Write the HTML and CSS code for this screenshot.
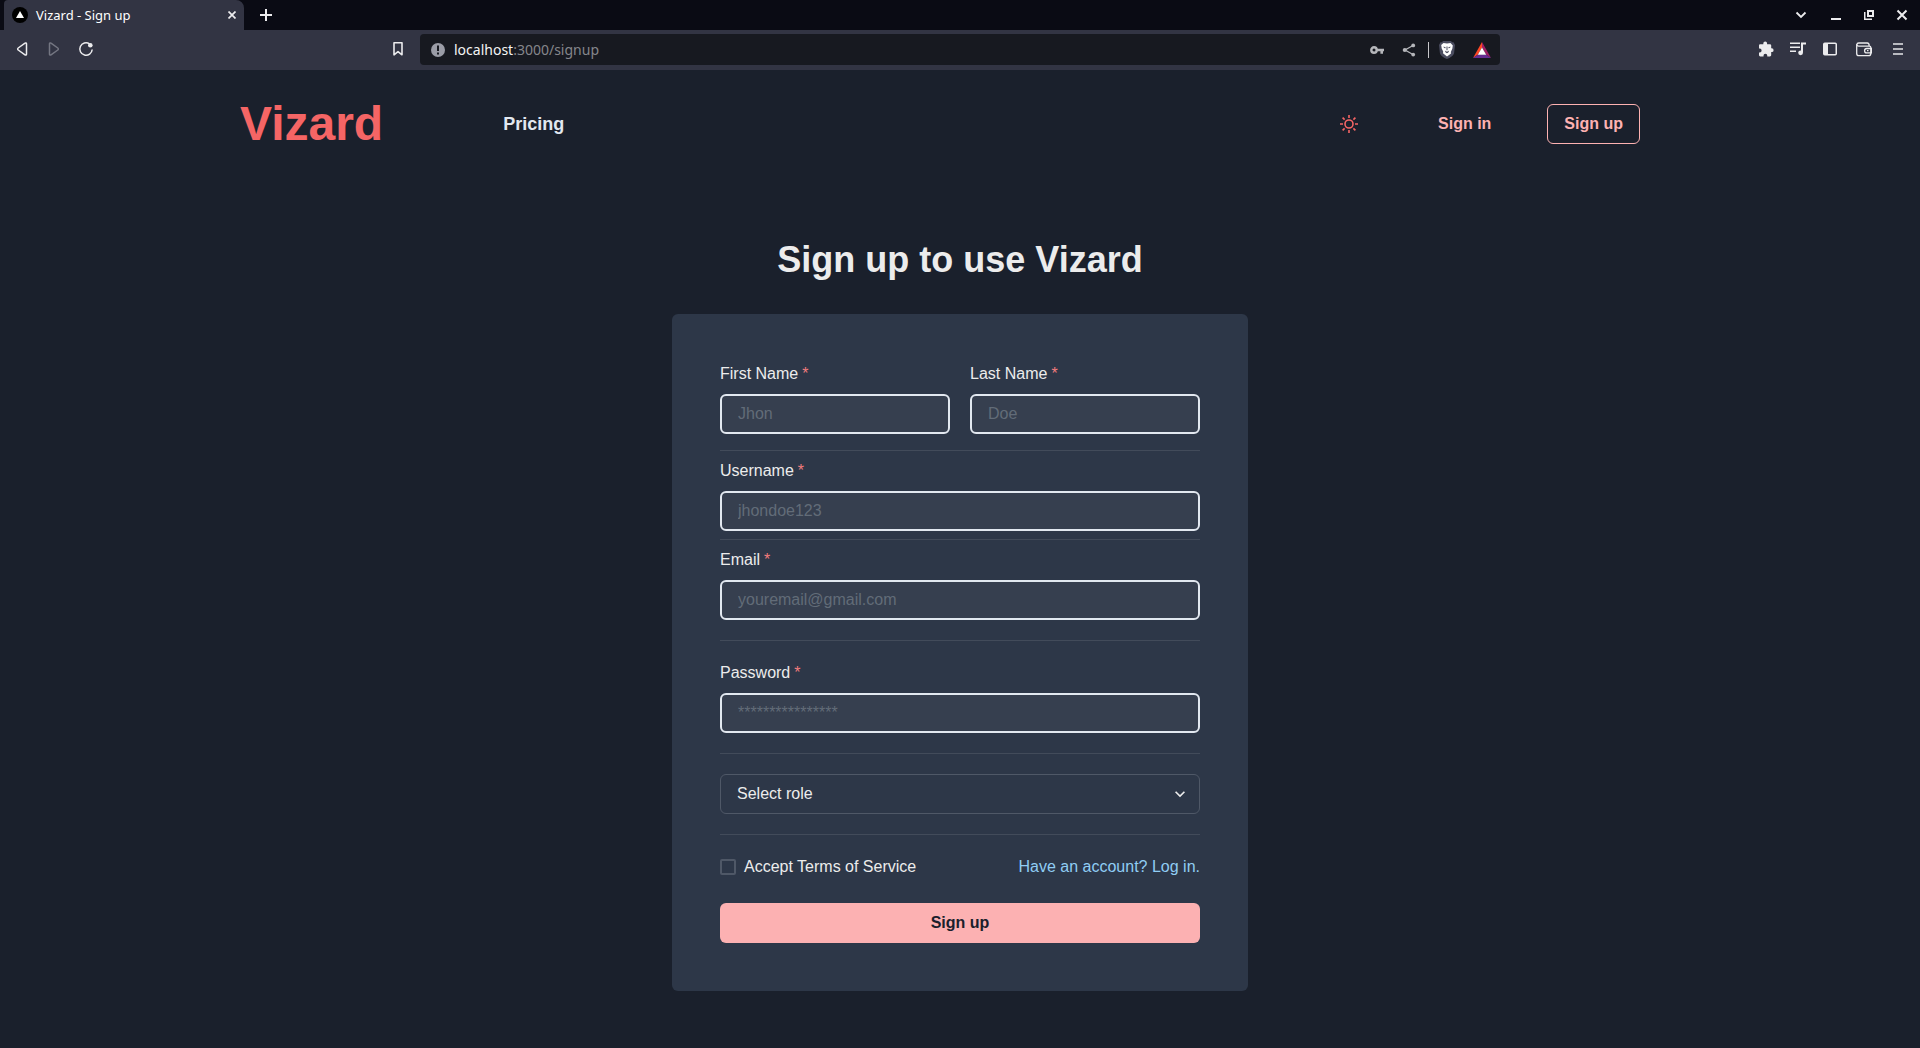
FILE: index.html
```html
<!DOCTYPE html>
<html lang="en">
<head>
  <meta charset="utf-8">
  <meta name="viewport" content="width=device-width, initial-scale=1">
  <title>Vizard - Sign up</title>
  <link rel="stylesheet" href="styles.css">
</head>
<body>
  <div class="browser">
    <div class="tabstrip">
      <div class="tab">
        <svg class="tab-icon" width="16" height="16" viewBox="0 0 16 16" aria-hidden="true"><circle cx="8" cy="8" r="8" fill="#000"/><path d="M8 4l4 7H4z" fill="#fff"/></svg>
        <span class="tab-title">Vizard - Sign up</span>
        <button class="tab-close" aria-label="Close tab"><svg width="8" height="8" viewBox="0 0 8 8"><path d="M.5.5l7 7M7.500.5l-7 7" stroke="currentColor" stroke-width="1.700"/></svg></button>
      </div>
      <button class="tool" aria-label="New tab"><svg width="12" height="12" viewBox="0 0 12 12"><path d="M6 0v12M0 6h12" stroke="currentColor" stroke-width="2"/></svg></button>
      <div class="window-controls">
        <button class="tool tab-search" aria-label="Search tabs"><svg width="12" height="12" viewBox="0 0 12 12" fill="none"><path d="M1.500 3.500L6 8l4.500-4.500" stroke="currentColor" stroke-width="1.800"/></svg></button>
        <button class="tool" aria-label="Minimise"><svg width="12" height="12" viewBox="0 0 12 12"><path d="M1 9h10v2H1z" fill="currentColor"/></svg></button>
        <button class="tool" aria-label="Restore"><svg width="12" height="12" viewBox="0 0 12 12" fill="none" stroke="currentColor"><path d="M5 2h5v5H5z" stroke-width="2"/><path d="M1.750 3v7.250H9" stroke-width="1.500"/></svg></button>
        <button class="tool" aria-label="Close"><svg width="12" height="12" viewBox="0 0 12 12"><path d="M1.500 1.500l9 9M10.500 1.500l-9 9" stroke="currentColor" stroke-width="2"/></svg></button>
      </div>
    </div>
    <div class="toolbar">
      <div class="toolbar-left">
        <button class="tool" aria-label="Back"><svg width="16" height="16" viewBox="0 0 16 16" fill="none"><path d="M12.500 2.800v10.400c0 .9-.9 1.100-1.500.6L4.200 9c-.7-.5-.7-1.500 0-2L11 2.200c.6-.5 1.500-.2 1.500.6z" stroke="currentColor" stroke-width="1.500"/></svg></button>
        <button class="tool tool-off" aria-label="Forward"><svg width="16" height="16" viewBox="0 0 16 16" fill="none"><path d="M3.500 2.800v10.400c0 .9.9 1.100 1.500.6L11.800 9c.7-.5.7-1.500 0-2L5 2.200c-.6-.5-1.500-.2-1.500.6z" stroke="currentColor" stroke-width="1.500"/></svg></button>
        <button class="tool" aria-label="Reload"><svg width="16" height="16" viewBox="0 0 16 16" fill="none"><path d="M11.500 2.900A6.200 6.200 0 1 0 14.200 8.500" stroke="currentColor" stroke-width="1.500"/><circle cx="12.300" cy="4.200" r="2.300" fill="currentColor"/></svg></button>
        <button class="tool bookmark" aria-label="Bookmark this page"><svg width="16" height="16" viewBox="0 0 16 16" fill="none"><path d="M4 1.800h8v12L8 10.600l-4 3.200z" stroke="currentColor" stroke-width="1.600" stroke-linejoin="round"/></svg></button>
      </div>
      <div class="address">
        <svg width="14" height="14" viewBox="0 0 14 14" aria-hidden="true"><circle cx="7" cy="7" r="7" fill="#9a9ca6"/><path d="M6 2.500h2V8H6zM6 9.500h2v2H6z" fill="#171920"/></svg>
        <div class="url"><span class="host">localhost</span>:3000/signup</div>
        <svg width="14" height="14" viewBox="0 0 14 14" fill="none" aria-hidden="true"><circle cx="4" cy="7" r="2.700" stroke="#b5b6ba" stroke-width="2.400"/><path d="M7 5.800h7v2.400h-1v2.600h-2.600V8.200H7z" fill="#b5b6ba"/></svg>
        <svg width="14" height="14" viewBox="0 0 14 14" aria-hidden="true"><path d="M11 2.500L3 7l8 4.500" stroke="#b5b6ba" stroke-width="1.300" fill="none"/><g fill="#b5b6ba"><circle cx="11.200" cy="2.400" r="1.900"/><circle cx="2.800" cy="7" r="2.100"/><circle cx="11.200" cy="11.600" r="1.900"/></g></svg>
        <div class="address-rule"></div>
        <svg width="16" height="18" viewBox="0 0 16 18" aria-hidden="true"><path d="M4 0h8l1 1.200h1.500L16 4l-.9 8c-.4 2.500-4 4.800-7.100 6-3.100-1.200-6.700-3.500-7.100-6L0 4l1.500-2.800H3z" fill="#4a4c5f"/><path d="M4.500 2l3.500.6 3.500-.6 2.300 2.400-.5 3.400-1.500 3.200.2 1.600L8 15.400l-4-3.200.2-1.600-1.500-3.200-.5-3.400z" fill="#fff"/><path d="M4 5.700l2.600.4-.4 1.300zM12 5.700l-2.600.4.4 1.300zM7.500 5.600h1v3.600h-1zM5.800 9.600L8 10.700l2.200-1.100-.9 1.800L8 12.300l-1.300-.9z" fill="#4a4c5f"/></svg>
        <svg width="18" height="16" viewBox="0 0 18 16" aria-hidden="true"><path d="M9 0v5.500L5 12.500 0 16z" fill="#ff4724"/><path d="M9 0v5.500l4 7 5 3.500z" fill="#9e1f63"/><path d="M0 16l5-3.500h8l5 3.500z" fill="#662d91"/><path d="M9 5.500l4.200 7.300H4.800z" fill="#fff"/></svg>
      </div>
      <div class="toolbar-right">
        <button class="tool" aria-label="Extensions"><svg width="16" height="16" viewBox="0 0 16 16"><path d="M1 4.500c0-.8.600-1.300 1.300-1.300h3V2.500a1.900 1.900 0 0 1 3.800 0v.7h2.800c.8 0 1.300.6 1.300 1.300v2.800h.5a1.900 1.900 0 0 1 0 3.800h-.5v3c0 .8-.6 1.300-1.300 1.300H9.300v-.7a1.900 1.900 0 0 0-3.800 0v.7H2.300c-.7 0-1.300-.6-1.300-1.300v-2.700h.7a1.900 1.900 0 0 0 0-3.800H1z" fill="currentColor"/></svg></button>
        <button class="tool" aria-label="Media controls"><svg width="16" height="16" viewBox="0 0 16 16"><path d="M0 1.500h10v1.600H0zM0 5.500h10v1.600H0zM0 9.500h6v1.600H0zM11 1.500h5v2h-3v8h-2z" fill="currentColor"/><circle cx="10.600" cy="11.800" r="2.400" fill="currentColor"/></svg></button>
        <button class="tool" aria-label="Sidebar"><svg width="16" height="16" viewBox="0 0 16 16"><rect x="1.750" y="2.250" width="12.500" height="11.500" rx="1" fill="none" stroke="currentColor" stroke-width="1.500"/><path d="M2 2h4v12H2z" fill="currentColor"/></svg></button>
        <button class="tool tool-spaced" aria-label="Wallet"><svg width="16" height="16" viewBox="0 0 16 16" fill="none" stroke="currentColor" stroke-width="1.300"><path d="M.7 3v9.500c0 1.400.8 2.200 2.200 2.200h9.700c1.400 0 2.200-.8 2.200-2.200V6.500c0-.9-.5-1.400-1.400-1.400H2.800C.3 5.100.3 2 2.800 2h8.500c1.400 0 1.900.6 1.900 3"/><path d="M15.500 7.500h-4.700a2.200 2.200 0 0 0 0 4.400h4.700zM11 9.700h1.500"/></svg></button>
        <button class="tool tool-dim tool-spaced" aria-label="Menu"><svg width="10" height="12" viewBox="0 0 10 12"><path d="M0 0h10v2H0zM0 5h10v2H0zM0 10h10v2H0z" fill="currentColor"/></svg></button>
      </div>
    </div>
  </div>

  <header class="site-header">
    <a class="logo" href="#">Vizard</a>
    <nav class="site-nav"><a class="nav-link" href="#">Pricing</a></nav>
    <div class="account">
      <button class="theme" aria-label="Toggle theme"><svg width="18" height="18" viewBox="0 0 18 18" fill="none" stroke="currentColor" stroke-width="1.600"><circle cx="9" cy="9" r="4"/><path d="M9 0v3M9 15v3M0 9h3M15 9h3M2.600 2.600l2 2M13.400 13.400l2 2M2.600 15.400l2-2M13.400 4.600l2-2"/></svg></button>
      <a class="button button-ghost" href="#">Sign in</a>
      <a class="button button-outline" href="#">Sign up</a>
    </div>
  </header>

  <main class="signup">
    <h1 class="title">Sign up to use Vizard</h1>
    <form class="card">
      <div class="names">
        <div class="field">
          <label class="label" for="first">First Name<span class="required">*</span></label>
          <input class="input" id="first" type="text" placeholder="Jhon">
        </div>
        <div class="field">
          <label class="label" for="last">Last Name<span class="required">*</span></label>
          <input class="input" id="last" type="text" placeholder="Doe">
        </div>
      </div>
      <hr class="divider divider-names">
      <div class="field">
        <label class="label" for="username">Username<span class="required">*</span></label>
        <input class="input" id="username" type="text" placeholder="jhondoe123">
      </div>
      <hr class="divider divider-tight">
      <div class="field">
        <label class="label" for="email">Email<span class="required">*</span></label>
        <input class="input" id="email" type="email" placeholder="youremail@gmail.com">
      </div>
      <hr class="divider">
      <div class="field">
        <label class="label" for="password">Password<span class="required">*</span></label>
        <input class="input" id="password" type="password" placeholder="****************">
      </div>
      <hr class="divider">
      <div class="select-box">
        <select class="select" aria-label="Role"><option>Select role</option></select>
        <svg class="chevron" width="20" height="20" viewBox="0 0 24 24" aria-hidden="true"><path d="M16.590 8.590L12 13.170 7.410 8.590 6 10l6 6 6-6z" fill="currentColor"/></svg>
      </div>
      <hr class="divider">
      <div class="terms">
        <label class="check-label"><input class="check" type="checkbox">Accept Terms of Service</label>
        <a class="login" href="#">Have an account? Log in.</a>
      </div>
      <button class="button button-solid" type="submit">Sign up</button>
    </form>
  </main>
</body>
</html>
```
FILE: styles.css
```css
*,
*::before,
*::after {
  box-sizing: border-box;
}

body {
  margin: 0;
  min-height: 100vh;
  background: #1a202c;
  color: #ececec;
  font: 16px/24px "Liberation Sans", Arial, sans-serif;
}

a {
  color: inherit;
  text-decoration: none;
}

button {
  padding: 0;
  border: 0;
  background: none;
  color: inherit;
  font: inherit;
  cursor: pointer;
}

svg {
  display: block;
  flex: none;
}

/* Browser window */
.browser {
  color: #ececee;
  font-family: "Noto Sans", sans-serif;
}

.tabstrip {
  display: flex;
  height: 30px;
  padding: 0 2px 0 4px;
  background: #0a0b14;
}

.tab {
  display: flex;
  align-items: center;
  gap: 8px;
  width: 240px;
  padding: 0 8px;
  border-radius: 4px 8px 0 0;
  background: #323443;
  font-size: 13px;
}

.tab-title {
  flex: 1;
  color: #fff;
}

.tool {
  display: grid;
  place-items: center;
  width: 32px;
  height: 100%;
}

.tab + .tool {
  margin-left: 6px;
}

.tool-off {
  color: #747682;
}

.tool-dim {
  color: #b9bac0;
}

.tool-spaced {
  margin-left: 2px;
}

.window-controls {
  display: flex;
  gap: 1px;
  margin-left: auto;
}

.tab-search {
  margin-right: 2px;
}

.toolbar {
  display: grid;
  grid-template-columns: 1fr minmax(0, 1080px) 1fr;
  align-items: end;
  height: 40px;
  padding-bottom: 5px;
  background: #323443;
}

.toolbar-left,
.toolbar-right {
  display: flex;
  height: 32px;
  padding: 0 6px;
}

.toolbar-right {
  justify-content: flex-end;
}

.bookmark {
  margin-left: auto;
}

.address {
  display: flex;
  align-items: center;
  gap: 18px;
  height: 31px;
  padding: 0 9px 0 11px;
  border-radius: 4px;
  background: #171920;
}

.url {
  flex: 1;
  margin-left: -9px;
  color: #85868b;
  font-size: 14px;
}

.host {
  color: #f4f4f5;
}

.address-rule {
  width: 1px;
  height: 16px;
  margin: 0 -8px 0 -6px;
  background: #c8c8cb;
}

/* Site header */
.site-header {
  display: flex;
  align-items: center;
  gap: 120px;
  height: 108px;
  padding: 0 280px 0 240px;
}

.logo {
  color: #f56565;
  font-size: 48px;
  font-weight: 700;
  line-height: 56px;
}

.nav-link {
  color: #e2e8f0;
  font-size: 18px;
  font-weight: 700;
}

.account {
  display: flex;
  align-items: center;
  gap: 40px;
  margin-left: auto;
}

.theme {
  padding: 0 24px;
  color: #f56565;
}

.button {
  height: 40px;
  padding: 0 16px;
  border-radius: 6px;
  font-weight: 700;
  line-height: 40px;
}

.button-ghost,
.button-outline {
  color: #feb2b2;
}

.button-outline {
  border: 1px solid #feb2b2;
  line-height: 38px;
}

/* Sign-up form */
.signup {
  display: flex;
  flex-direction: column;
  align-items: center;
  gap: 32px;
  padding: 60px 16px 48px;
}

.title {
  margin: 0;
  font-size: 36px;
  font-weight: 700;
  line-height: 44px;
}

.card {
  display: flex;
  flex-direction: column;
  width: 100%;
  max-width: 576px;
  padding: 48px;
  border-radius: 6px;
  background: #2d3748;
}

.names {
  display: grid;
  grid-template-columns: 1fr 1fr;
  gap: 20px;
}

.field {
  display: flex;
  flex-direction: column;
  gap: 8px;
}

.required {
  margin-left: 4px;
  color: #f17c7d;
}

.input {
  width: 100%;
  height: 40px;
  padding: 0 16px;
  border: 2px solid #e2e8f0;
  border-radius: 6px;
  background: #363f4f;
  color: inherit;
  font: inherit;
}

.input::placeholder {
  color: #626c78;
  opacity: 1;
}

.divider {
  width: 100%;
  height: 1px;
  margin: 20px 0;
  border: 0;
  background: #424b5a;
}

.divider-names {
  margin: 16px 0 8px;
}

.divider-tight {
  margin: 8px 0;
}

.select-box {
  display: grid;
  align-items: center;
}

.select {
  grid-area: 1 / 1;
  height: 40px;
  padding: 0 32px 0 16px;
  border: 1px solid #4f5867;
  border-radius: 6px;
  appearance: none;
  background: transparent;
  color: inherit;
  font: inherit;
}

.chevron {
  grid-area: 1 / 1;
  justify-self: end;
  margin-right: 10px;
  pointer-events: none;
}

.terms {
  display: flex;
  justify-content: space-between;
  margin-bottom: 24px;
}

.check-label {
  display: flex;
  align-items: center;
  gap: 8px;
}

.check {
  width: 16px;
  height: 16px;
  margin: 0;
  border: 2px solid #4f5867;
  border-radius: 2px;
  appearance: none;
}

.login {
  color: #90cdf4;
}

.button-solid {
  background: #fcb1b2;
  color: #1a202c;
}
```
